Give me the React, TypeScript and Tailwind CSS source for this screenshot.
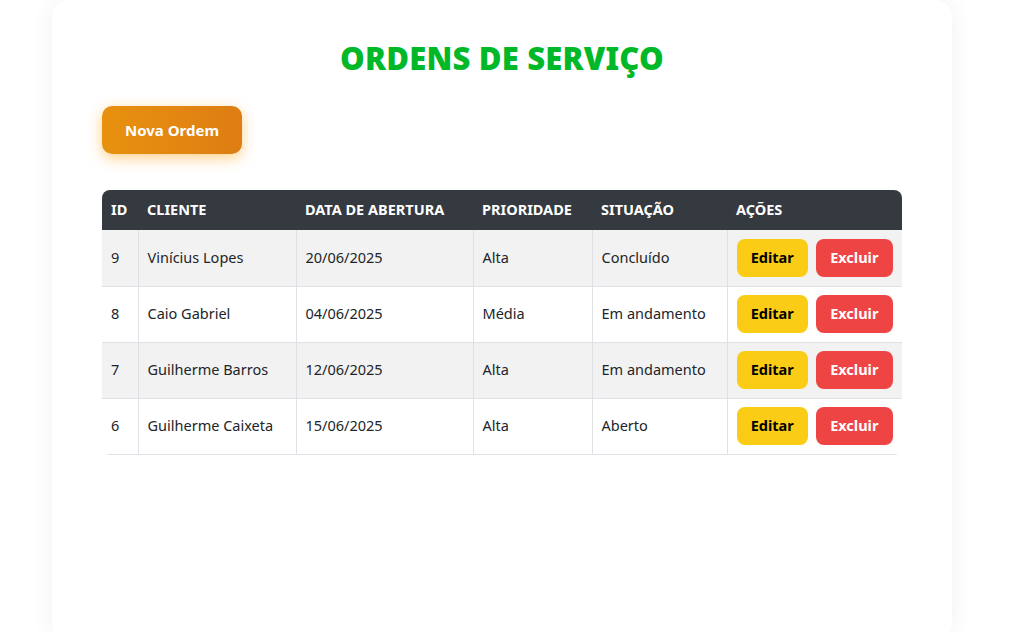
import React from 'react';

type Ordem = {
    id: number;
    cliente: string;
    data: string;
    prioridade: string;
    situacao: string;
};

const ordens: Ordem[] = [
    { id: 9, cliente: 'Vinícius Lopes', data: '20/06/2025', prioridade: 'Alta', situacao: 'Concluído' },
    { id: 8, cliente: 'Caio Gabriel', data: '04/06/2025', prioridade: 'Média', situacao: 'Em andamento' },
    { id: 7, cliente: 'Guilherme Barros', data: '12/06/2025', prioridade: 'Alta', situacao: 'Em andamento' },
    { id: 6, cliente: 'Guilherme Caixeta', data: '15/06/2025', prioridade: 'Alta', situacao: 'Aberto' },
];

const colunas = [
    { label: 'ID', w: 'w-[36px]' },
    { label: 'CLIENTE', w: 'w-[158px]' },
    { label: 'DATA DE ABERTURA', w: 'w-[177px]' },
    { label: 'PRIORIDADE', w: 'w-[119px]' },
    { label: 'SITUAÇÃO', w: 'w-[135px]' },
    { label: 'AÇÕES', w: 'w-[175px]' },
];

export default function App() {
    return (
        <div className="min-h-[632px] bg-white font-['Noto_Sans','Open_Sans',sans-serif] text-[#212529] overflow-hidden">
            <div className="ml-[52px] w-[900px] h-[640px] bg-white rounded-2xl shadow-[0_0_24px_rgba(0,0,0,0.06)] px-[50px] pt-[38px]">
                {/* Titulo */}
                <h1 className="text-center text-[31px] leading-[40px] font-black text-[#00b828] tracking-[0.2px]">
                    ORDENS DE SERVIÇO
                </h1>

                <button className="mt-[28px] w-[140px] h-[48px] rounded-[10px] bg-gradient-to-r from-[#e8910f] to-[#de7d13] text-white text-[15px] font-bold shadow-[0_4px_14px_rgba(255,170,40,0.55)]">
                    Nova Ordem
                </button>

                {/* Tabela */}
                <div className="mt-[36px] w-[800px] rounded-lg overflow-hidden">
                    <table className="w-full table-fixed border-collapse text-[14.5px]">
                        <thead>
                            <tr className="bg-[#343a40] text-white h-[40px]">
                                {colunas.map((c) => (
                                    <th key={c.label} className={`${c.w} text-left font-bold px-[9px]`}>
                                        {c.label}
                                    </th>
                                ))}
                            </tr>
                        </thead>
                        <tbody>
                            {ordens.map((o, i) => (
                                <tr key={o.id} className={`${i % 2 === 0 ? 'bg-[#f2f2f2]' : 'bg-white'} h-[56px] border-b border-[#dee2e6]`}>
                                    <td className="px-[9px] border-r border-[#dee2e6]">{o.id}</td>
                                    <td className="px-[9px] border-r border-[#dee2e6]">{o.cliente}</td>
                                    <td className="px-[9px] border-r border-[#dee2e6]">{o.data}</td>
                                    <td className="px-[9px] border-r border-[#dee2e6]">{o.prioridade}</td>
                                    <td className="px-[9px] border-r border-[#dee2e6]">{o.situacao}</td>
                                    <td className="px-[9px] border-r border-[#dee2e6]">
                                        <div className="flex gap-2">
                                            <button className="w-[72px] h-[38px] rounded-lg bg-[#facc15] text-black font-bold text-[14.5px]">
                                                Editar
                                            </button>
                                            <button className="w-[77px] h-[38px] rounded-lg bg-[#ef4444] text-white font-bold text-[14.5px]">
                                                Excluir
                                            </button>
                                        </div>
                                    </td>
                                </tr>
                            ))}
                        </tbody>
                    </table>
                </div>
            </div>
        </div>
    );
}
